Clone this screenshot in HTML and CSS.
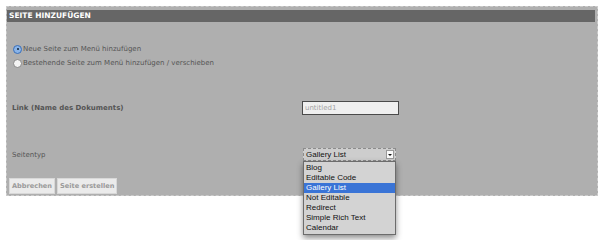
FILE: index.html
```html
<!DOCTYPE html>
<html lang="de">
  <head>
    <meta charset="UTF-8" />
    <title>Seite hinzufügen</title>
    <link rel="stylesheet" href="styles.css">
  </head>
  <body>
    <!-- Dialog: neue Seite -->
    <div class="panel">
      <div class="panel-title">SEITE HINZUFÜGEN</div>

      <div class="choices">
        <div class="choice"><span class="radio checked"></span>Neue Seite zum Menü hinzufügen</div>
        <div class="choice"><span class="radio"></span>Bestehende Seite zum Menü hinzufügen / verschieben</div>
      </div>

      <div class="row row-link">
        <div class="label bold">Link (Name des Dokuments)</div>
        <div class="control"><div class="textbox">untitled1</div></div>
      </div>

      <div class="row row-type">
        <div class="label">Seitentyp</div>
        <div class="control">
          <div class="select">
            <span class="select-value">Gallery List</span>
            <span class="select-arrow"></span>
            <!-- geöffnete Liste -->
            <ul class="options">
              <li>Blog</li>
              <li>Editable Code</li>
              <li class="active">Gallery List</li>
              <li>Not Editable</li>
              <li>Redirect</li>
              <li>Simple Rich Text</li>
              <li>Calendar</li>
            </ul>
          </div>
        </div>
      </div>

      <div class="buttons">
        <span class="button">Abbrechen</span>
        <span class="button">Seite erstellen</span>
      </div>
    </div>
  </body>
</html>
```

FILE: styles.css
```css
/* Grundlayout */
html {
  height: 100%;
}

body {
  margin: 0;
  min-height: 100%;
  background: #fff;
  font-family: "DejaVu Sans", Verdana, sans-serif;
  font-size: 7px;
  color: #555;
}

/* Rahmen des Dialogs */
.panel {
  margin: 6px 6px 0 6px;
  border: 1px dashed #cbcbcb;
  background: #afafaf;
  padding: 3px 2px 1px 0;
}

.panel-title {
  height: 12px;
  line-height: 12px;
  background: #666;
  color: #fff;
  font-weight: bold;
  font-size: 7.5px;
  padding-left: 2px;
}

/* Radiobuttons */
.choices {
  margin-top: 20px;
  padding-left: 6px;
}

.choice {
  height: 14px;
  display: flex;
  align-items: center;
  color: #555;
}

.radio {
  width: 9px;
  height: 9px;
  border-radius: 50%;
  border: 1px solid #888;
  background: #f4f4f4;
  margin-right: 1px;
  box-sizing: border-box;
  position: relative;
}

.radio.checked {
  border-color: #3a6fb8;
  background: #8ab4e8;
}

.radio.checked::after {
  content: "";
  position: absolute;
  left: 2.5px;
  top: 2.5px;
  width: 2px;
  height: 2px;
  border-radius: 50%;
  background: #123;
}

/* Formularzeilen */
.row {
  display: grid;
  grid-template-columns: 295px 1fr;
  align-items: center;
}

.row-link {
  margin-top: 31px;
}

.row-type {
  margin-top: 33px;
}

.label {
  padding-left: 5px;
}

.bold {
  font-weight: bold;
}

.textbox {
  width: 97px;
  height: 14px;
  box-sizing: border-box;
  border: 1px solid #4a4a4a;
  background: #efefef;
  color: #a4a4a4;
  line-height: 12px;
  padding-left: 2px;
}

/* Auswahlliste */
.select {
  position: relative;
  width: 93px;
  height: 13px;
  box-sizing: border-box;
  margin-left: 1px;
  border: 1px dashed #8c8c8c;
  background: #cdcdcd;
  display: flex;
  align-items: center;
  justify-content: space-between;
  font-family: "Liberation Sans", Arial, sans-serif;
  font-size: 8px;
  color: #111;
}

.select-value {
  padding-left: 2px;
}

.select-arrow {
  width: 8px;
  height: 9px;
  margin-right: 1px;
  background: #fafafa;
  border: 1px solid #999;
  box-sizing: border-box;
  position: relative;
}

.select-arrow::after {
  content: "";
  position: absolute;
  left: 1px;
  top: 3px;
  border-left: 2px solid transparent;
  border-right: 2px solid transparent;
  border-top: 2px solid #111;
}

.options {
  position: absolute;
  top: 12px;
  left: -1px;
  z-index: 5;
  width: 93px;
  box-sizing: border-box;
  margin: 0;
  padding: 1px 0 1px 0;
  list-style: none;
  background: #d3d3d3;
  border: 1px solid #6c6c6c;
  box-shadow: 0 3px 6px rgba(0, 0, 0, 0.45);
}

.options li {
  height: 10px;
  line-height: 10px;
  padding-left: 2px;
  color: #111;
}

.options li.active {
  background: #3a74d6;
  color: #fff;
}

/* Schaltflächen */
.buttons {
  margin-top: 17px;
  padding-left: 2px;
  display: flex;
  gap: 2px;
}

.button {
  height: 14px;
  line-height: 14px;
  padding: 0 2px;
  background: #ebebeb;
  border: 1px solid #d8d8d8;
  color: #9a9a9a;
  font-weight: bold;
  font-size: 6.6px;
}
```
